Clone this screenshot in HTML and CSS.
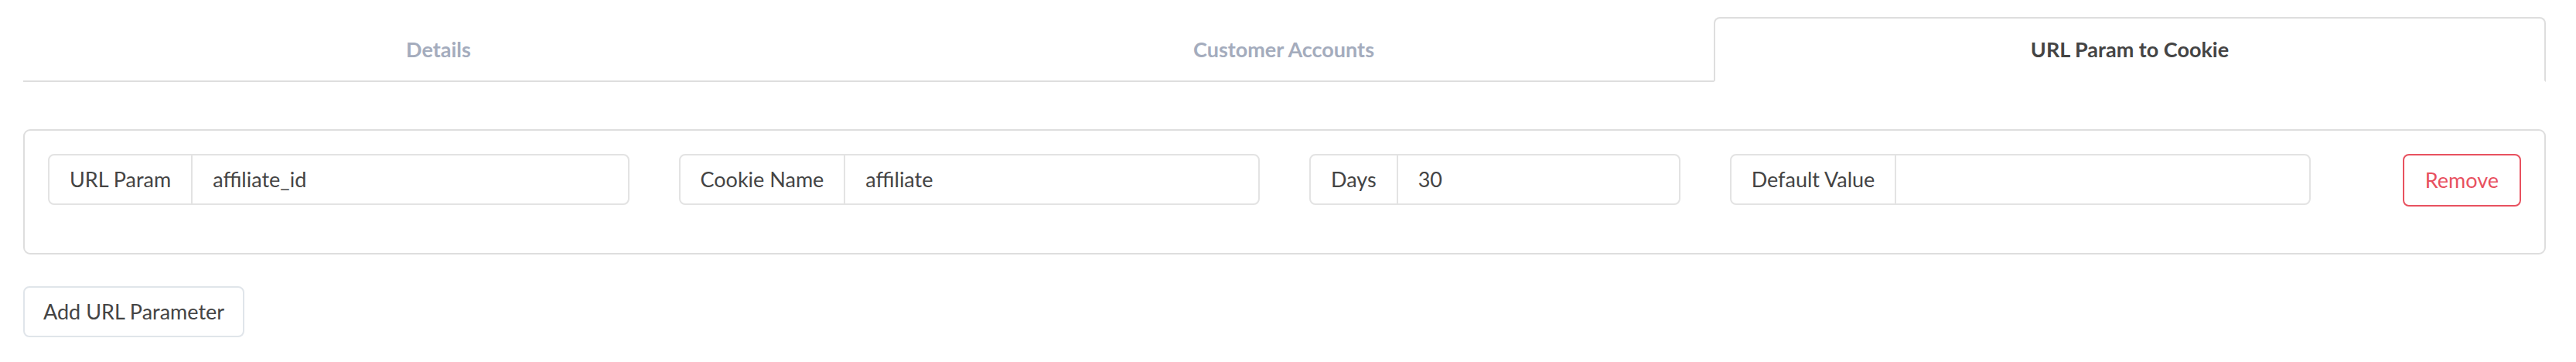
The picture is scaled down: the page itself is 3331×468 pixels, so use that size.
FILE: index.html
```html
<!DOCTYPE html>
<html lang="en">
<head>
    <meta charset="UTF-8">
    <meta name="viewport" content="width=device-width, initial-scale=1.0">
    <title>URL Param to Cookie</title>
    <link rel="stylesheet" href="styles.css">
</head>
<body>
    <div class="page">
        <!-- Tabs -->
        <div class="tabs">
            <div class="tab">Details</div>
            <div class="tab">Customer Accounts</div>
            <div class="tab active">URL Param to Cookie</div>
        </div>

        <!-- Param rows -->
        <div class="param-card">
            <div class="param-row">
                <div class="col col-3">
                    <div class="input-group">
                        <span class="addon">URL Param</span>
                        <input type="text" value="affiliate_id">
                    </div>
                </div>
                <div class="col col-3">
                    <div class="input-group">
                        <span class="addon">Cookie Name</span>
                        <input type="text" value="affiliate">
                    </div>
                </div>
                <div class="col col-2">
                    <div class="input-group">
                        <span class="addon">Days</span>
                        <input type="text" value="30">
                    </div>
                </div>
                <div class="col col-3">
                    <div class="input-group">
                        <span class="addon">Default Value</span>
                        <input type="text" value="">
                    </div>
                </div>
                <div class="col col-1 col-end">
                    <button class="btn btn-remove">Remove</button>
                </div>
            </div>
        </div>

        <button class="btn btn-add">Add URL Parameter</button>
    </div>
</body>
</html>
```

FILE: styles.css
```css
body {
    margin: 0;
    padding: 0;
    background: #ffffff;
    font-family: Lato, "Noto Sans", sans-serif;
    font-size: 27px;
    color: #444444;
}
.page {
    margin: 0 39px 0 30px;
    padding-top: 22px;
}

/* tabs */
.tabs {
    display: grid;
    grid-template-columns: 1074fr 1112fr 1076fr;
}
.tab {
    text-align: center;
    font-weight: 700;
    color: #a4acbd;
    line-height: 42px;
    padding: 19px 0;
    border-top: 2px solid transparent;
    border-bottom: 2px solid #dedede;
}
.tab.active {
    color: #444444;
    border: 2px solid #dedede;
    border-bottom-color: transparent;
    border-radius: 8px 8px 0 0;
}

/* card */
.param-card {
    margin-top: 61px;
    border: 2px solid #dedede;
    border-radius: 9px;
    padding: 30px 30px 60px;
}
.param-row {
    display: flex;
    margin: 0 -32px;
}
.col {
    box-sizing: border-box;
    min-width: 0;
    padding: 0 32px;
}
.col-1 { flex: 0 0 8.3333%; }
.col-2 { flex: 0 0 16.6667%; }
.col-3 { flex: 0 0 25%; }
.col-end {
    display: flex;
    justify-content: flex-end;
}

.input-group {
    display: flex;
    border: 2px solid #e3e3e3;
    border-radius: 8px;
    background: #fff;
}
.addon {
    padding: 11px 26px;
    line-height: 40px;
    border-right: 2px solid #e3e3e3;
    white-space: nowrap;
}
.input-group input {
    flex: 1;
    width: 0;
    min-width: 0;
    border: none;
    outline: none;
    background: transparent;
    font-family: inherit;
    font-size: 27px;
    color: #444444;
    padding: 11px 26px;
    line-height: 40px;
}

/* buttons */
.btn {
    font-family: inherit;
    font-size: 27px;
    line-height: 40px;
    background: #ffffff;
    border-radius: 8px;
    cursor: pointer;
}
.btn-remove {
    color: #e8515f;
    border: 2px solid #e8515f;
    padding: 12px 27px;
    white-space: nowrap;
}
.btn-add {
    margin-top: 41px;
    color: #444444;
    border: 2px solid #e0e5ea;
    padding: 11px 24px;
}
```
